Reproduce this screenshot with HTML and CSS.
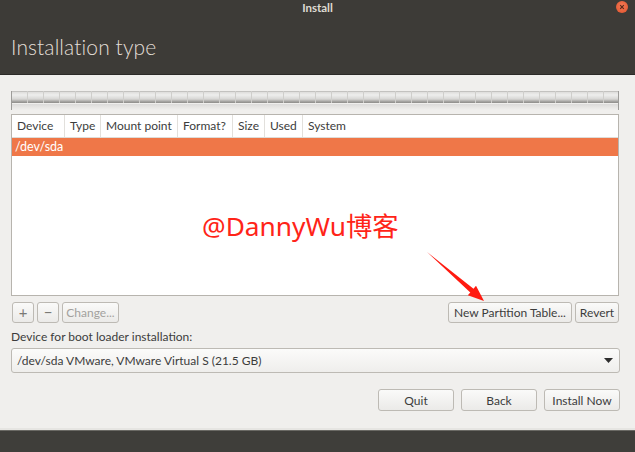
FILE: index.html
```html
<!DOCTYPE html>
<html>
<head>
<meta charset="utf-8">
<link rel="stylesheet" href="styles.css">
</head>
<body>
<div class="window">
  <header class="header">
    <div class="titlebar">
      <span class="title">Install</span>
      <span class="close"><svg width="12" height="12" viewBox="0 0 12 12"><path d="M4.2 4.2L7.8 7.8M7.8 4.2L4.2 7.8" stroke="#5a2a1a" stroke-width="1.2"/></svg></span>
    </div>
    <h1 class="heading">Installation type</h1>
  </header>
  <main class="content">
    <div class="partbar"></div>
    <div class="table">
      <div class="thead">
        <div class="th c1">Device</div>
        <div class="th c2">Type</div>
        <div class="th c3">Mount point</div>
        <div class="th c4">Format?</div>
        <div class="th c5">Size</div>
        <div class="th c6">Used</div>
        <div class="th c7">System</div>
      </div>
      <div class="row selected">/dev/sda</div>
      <div class="tbody"></div>
    </div>
    <div class="toolrow">
      <div class="tools-left">
        <button class="btn sq">+</button>
        <button class="btn sq">−</button>
        <button class="btn dis">Change...</button>
      </div>
      <div class="tools-right">
        <button class="btn npt">New Partition Table...</button>
        <button class="btn rev">Revert</button>
      </div>
    </div>
    <div class="label">Device for boot loader installation:</div>
    <div class="combo">
      <span>/dev/sda VMware, VMware Virtual S (21.5 GB)</span>
      <svg width="9" height="5" viewBox="0 0 9 5"><path d="M0 0H9L4.5 5Z" fill="#2e2e2e"/></svg>
    </div>
    <div class="actions">
      <button class="btn act">Quit</button>
      <button class="btn act">Back</button>
      <button class="btn act">Install Now</button>
    </div>
  </main>
  <footer class="footer"></footer>
  <div class="watermark">@DannyWu博客</div>
  <svg class="arrow" width="70" height="60" viewBox="0 0 70 60">
    <path d="M1 2L47.5 38.7L50 35.8L58 51L41.8 45.3L44.3 42.5Z" fill="#ff1a10"/>
  </svg>
</div>
</body>
</html>
```
FILE: styles.css
```css
* { box-sizing: border-box; }
html, body { margin: 0; padding: 0; }
body {
  width: 635px;
  height: 452px;
  overflow: hidden;
  background: #f0efed;
  font-family: "Lato", "Open Sans", sans-serif;
  font-size: 12px;
  color: #3c3c3c;
}
.window {
  position: relative;
  width: 635px;
  height: 452px;
  display: flex;
  flex-direction: column;
}
.header {
  height: 75px;
  background: #3d3b37;
  border-bottom: 1px solid #2b2a27;
  display: flex;
  flex-direction: column;
}
.titlebar {
  height: 14px;
  display: flex;
  justify-content: center;
  align-items: center;
  position: relative;
}
.title {
  color: #dfdbd2;
  font-weight: bold;
  font-size: 11.5px;
}
.close {
  position: absolute;
  right: 7px;
  top: 1px;
  width: 12px;
  height: 12px;
  border-radius: 50%;
  background: radial-gradient(circle at 50% 40%, #f47a55, #e0522c);
  display: flex;
  align-items: center;
  justify-content: center;
}
.heading {
  margin: 20px 0 0 11px;
  font-weight: 300;
  font-size: 21px;
  color: #e2ded6;
  letter-spacing: 0.1px;
}
.content {
  flex: 1;
  padding: 16px 16px 0 11px;
  display: flex;
  flex-direction: column;
}
.partbar {
  height: 19px;
  background:
    linear-gradient(to bottom, transparent 0, transparent 12px, #f0efed 12px, #f0efed 13px, rgba(160,160,160,0.25) 13px, rgba(240,239,237,0) 19px),
    repeating-linear-gradient(to right, transparent 0, transparent 15px, #cfcecb 15px, #cfcecb 16px),
    linear-gradient(to bottom, #a8a7a4 0, #dedddb 1px, #eeeeed 4px, #d8d7d5 8px, #9a9996 11px, #8f8e8b 12px, #f0efed 12px);
  background-size: 100% 19px, 100% 12px, 100% 19px;
  background-repeat: no-repeat;
  border-left: 1px solid #9d9c99;
  border-right: 1px solid #9d9c99;
  margin-bottom: 4px;
}
.table {
  height: 182px;
  border: 1px solid #b7b4ae;
  background: #fff;
  display: flex;
  flex-direction: column;
}
.thead {
  display: flex;
  height: 23px;
  border-bottom: 1px solid #dedcd8;
}
.th {
  padding: 0 0 0 5px;
  line-height: 22px;
  border-right: 1px solid #e2e0dc;
  color: #3c3c3c;
  white-space: nowrap;
}
.c1 { width: 53px; }
.c2 { width: 36px; }
.c3 { width: 77px; }
.c4 { width: 55px; }
.c5 { width: 32px; }
.c6 { width: 38px; }
.c7 { flex: 1; border-right: none; }
.row {
  height: 18px;
  line-height: 18px;
  padding-left: 3px;
}
.selected {
  background: #ef7748;
  color: #fff;
  font-size: 12.5px;
}
.tbody { flex: 1; }
.toolrow {
  margin-top: 6px;
  display: flex;
  justify-content: space-between;
  height: 21px;
}
.tools-left, .tools-right { display: flex; gap: 3px; }
.tools-left { padding-left: 1px; }
.btn {
  font-family: inherit;
  font-size: 12px;
  color: #3c3c3c;
  background: linear-gradient(#fafaf9, #ebeae8);
  border: 1px solid #bdbab4;
  border-radius: 3px;
  padding: 0;
  height: 21px;
  margin: 0;
}
.sq { width: 22px; color: #7a7975; font-size: 15px; line-height: 17px; }
.dis { width: 57px; color: #a3a19d; }
.npt { width: 124px; }
.rev { width: 44px; }
.label {
  margin-top: 6px;
  height: 19px;
  line-height: 16px;
  color: #3c3c3c;
}
.combo {
  height: 25px;
  border: 1px solid #bdbab4;
  border-radius: 3px;
  background: linear-gradient(#fbfbfa, #efeeec);
  display: flex;
  align-items: center;
  justify-content: space-between;
  padding: 0 6px 0 5px;
  margin-right: -1px;
}
.actions {
  margin-top: 16px;
  display: flex;
  justify-content: flex-end;
  gap: 7px;
  margin-right: -1px;
}
.act { width: 76px; height: 22px; }
.footer {
  height: 24px;
  background: #3f3e3a;
  border-top: 2px solid #e6e5e2;
  box-shadow: inset 0 1px 0 #6a6964;
}
.watermark {
  position: absolute;
  left: 202px;
  top: 205px;
  font-family: "Noto Sans", "Noto Sans CJK SC", sans-serif;
  font-size: 26.3px;
  color: #ff2418;
}
.arrow {
  position: absolute;
  left: 426px;
  top: 250px;
}
```
